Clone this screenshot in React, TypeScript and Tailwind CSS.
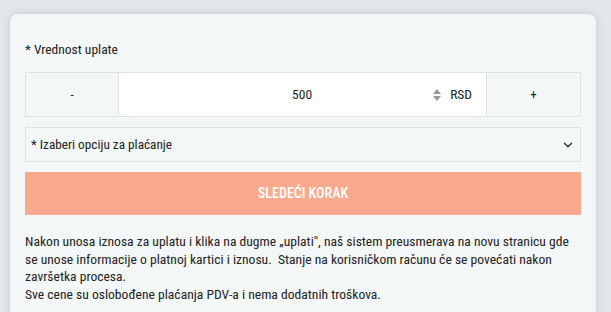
import { ChevronDown } from "lucide-react";

const FONT = {
  fontFamily: '"Roboto Condensed", "Liberation Sans Narrow", "DejaVu Sans Condensed", Roboto, sans-serif',
};

export default function App() {
  return (
    <div className="min-h-[312px] bg-[#e3e7e9] pt-[14px] px-[10px] overflow-hidden" style={FONT}>
      <div className="bg-[#f4f7f8] rounded-t-[8px] shadow-[0_0_8px_rgba(0,0,0,0.12)] w-[586px] h-[320px] px-[15px] pt-[27px]">
        {/* Amount */}
        <label className="block text-[13.5px] text-[#222] leading-[16px]">* Vrednost uplate</label>
        <div className="mt-[15px] flex h-[45px] border border-[#dfe3e5]">
          <button className="w-[93px] bg-[#f4f7f8] text-[13px] text-[#222] border-r border-[#dfe3e5]">-</button>
          <div className="flex-1 bg-white flex items-center">
            <span className="flex-1 text-center text-[13.5px] text-[#222] pl-[52px]">500</span>
            <div className="flex flex-col items-center gap-[2px] mr-[9px]">
              <div className="w-0 h-0 border-l-[4px] border-r-[4px] border-b-[5px] border-l-transparent border-r-transparent border-b-[#9a9a9a]" />
              <div className="w-0 h-0 border-l-[4px] border-r-[4px] border-t-[5px] border-l-transparent border-r-transparent border-t-[#9a9a9a]" />
            </div>
            <span className="text-[13.5px] text-[#222] mr-[14px]">RSD</span>
          </div>
          <button className="w-[94px] bg-[#f4f7f8] text-[13px] text-[#222] border-l border-[#dfe3e5]">+</button>
        </div>

        {/* Payment option */}
        <div className="mt-[10px] h-[35px] border border-[#dfe3e5] flex items-center justify-between pl-[5px] pr-[5px]">
          <span className="text-[13.25px] text-[#222]">* Izaberi opciju za plaćanje</span>
          <ChevronDown className="w-[14px] h-[14px] text-[#333]" strokeWidth={2.5} />
        </div>

        {/* Next */}
        <button className="mt-[10px] w-full h-[43px] bg-[#f9a98d] text-white text-[14px] font-medium">
          SLEDEĆI KORAK
        </button>

        <p className="mt-[18px] text-[13.6px] leading-[17.5px] text-[#222]">
          Nakon unosa iznosa za uplatu i klika na dugme „uplati", naš sistem preusmerava na novu stranicu gde se unose informacije o platnoj kartici i iznosu.&nbsp; Stanje na korisničkom računu će se povećati nakon završetka procesa.
          <br />
          Sve cene su oslobođene plaćanja PDV-a i nema dodatnih troškova.
        </p>
      </div>
    </div>
  );
}
